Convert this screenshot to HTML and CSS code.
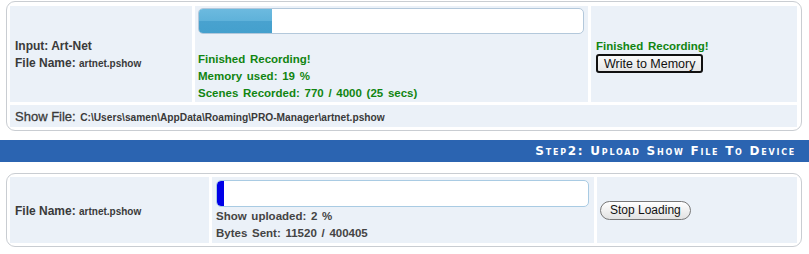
FILE: index.html
```html
<!DOCTYPE html>
<html>
<head>
<meta charset="utf-8">
<link rel="stylesheet" href="styles.css">
</head>
<body>
<div class="panel rec">
  <div class="cell info">
    <div class="lbl">Input: Art-Net</div>
    <div class="lbl">File Name: <b class="val">artnet.pshow</b></div>
  </div>
  <div class="cell mid">
    <div class="bar"><div class="fill" style="width:19%"></div></div>
    <div class="green lines">
      <div>Finished Recording!</div>
      <div>Memory used: 19 %</div>
      <div>Scenes Recorded: 770 / 4000 (25 secs)</div>
    </div>
  </div>
  <div class="cell act">
    <div class="green">Finished Recording!</div>
    <button class="btn-write">Write to Memory</button>
  </div>
  <div class="cell showfile"><span class="big">Show File:</span> <b class="val">C:\Users\samen\AppData\Roaming\PRO-Manager\artnet.pshow</b></div>
</div>

<div class="stepbar">Step2: Upload Show File To Device</div>

<div class="panel up">
  <div class="cell info">
    <div class="lbl">File Name: <b class="val">artnet.pshow</b></div>
  </div>
  <div class="cell mid2">
    <div class="bar bar2"><div class="fill2" style="width:2%"></div></div>
    <div class="lines dark">
      <div>Show uploaded: 2 %</div>
      <div>Bytes Sent: 11520 / 400405</div>
    </div>
  </div>
  <div class="cell act2">
    <button class="btn-stop">Stop Loading</button>
  </div>
</div>
</body>
</html>
```
FILE: styles.css
```css
body {
  margin: 0;
  padding: 1px 7px 0 6px;
  background: #fff;
  font-family: "Liberation Sans", Arial, sans-serif;
  color: #333;
}
.panel {
  border: 1px solid #c9cdd2;
  border-radius: 9px;
  display: grid;
  gap: 3px;
  background: #fff;
}
.rec {
  padding: 4px 4px 3px 3px;
  grid-template-columns: 182px 1fr 206px;
  grid-template-rows: 96px 22px;
}
.up {
  margin-top: 11px;
  padding: 3px 4px 3px 3px;
  grid-template-columns: 199px 1fr 200px;
  grid-template-rows: 66px;
}
.cell {
  background: #ebf1f8;
}
.info {
  display: flex;
  flex-direction: column;
  justify-content: center;
  padding-left: 5px;
  padding-top: 2px;
}
.lbl {
  font-size: 12px;
  line-height: 17px;
  font-weight: bold;
  color: #3a3a3a;
}
.lbl .val {
  font-size: 10px;
}
.mid {
  padding: 2px 4px 0 3px;
}
.bar {
  height: 24px;
  border: 1px solid #b3c8db;
  border-radius: 5px;
  background: #fff;
  overflow: hidden;
}
.fill {
  height: 100%;
  background: linear-gradient(#6cbadf 0%, #5fb2da 48%, #49a2cf 52%, #44a0cd 100%);
}
.green {
  color: #118511;
  font-weight: bold;
  font-size: 11.5px;
  word-spacing: 1.5px;
}
.lines {
  line-height: 17px;
}
.mid .lines {
  margin-top: 17px;
}
.act {
  padding: 34px 0 0 5px;
}
.btn-write {
  display: block;
  margin-top: 2px;
  font-family: "Liberation Sans", Arial, sans-serif;
  font-size: 12.5px;
  height: 19px;
  padding: 0 6px;
  border: 2px solid #111;
  border-radius: 3px;
  background: linear-gradient(#fafafa, #e6e6e6);
  color: #111;
  line-height: 14px;
}
.showfile {
  grid-column: 1 / 4;
  padding: 2px 0 0 5px;
  font-weight: bold;
  color: #3a3a3a;
}
.showfile .val {
  font-size: 10.2px;
}
.big {
  font-size: 13px;
  font-weight: normal;
  -webkit-text-stroke: 0.3px #3a3a3a;
}
.stepbar {
  margin: 9px -7px 0 -6px;
  height: 22px;
  background: #2b64b1;
  color: #fff;
  font-family: "DejaVu Sans", Verdana, sans-serif;
  font-weight: bold;
  font-size: 12px;
  font-variant: small-caps;
  letter-spacing: 1.75px;
  text-align: right;
  padding-right: 13px;
  line-height: 22px;
}
.mid2 {
  padding: 3px 5px 0 4px;
}
.bar2 {
  height: 25px;
  border-color: #a9cbe3;
}
.fill2 {
  height: 100%;
  min-width: 6px;
  background: #0000e8;
  border-radius: 4px 0 0 4px;
}
.dark {
  font-size: 11.5px;
  font-weight: bold;
  color: #444;
  margin-top: 1px;
  word-spacing: 1.5px;
}
.act2 {
  display: flex;
  align-items: center;
  padding-left: 3px;
}
.btn-stop {
  font-family: "Liberation Sans", Arial, sans-serif;
  font-size: 12px;
  height: 19px;
  padding: 0 9px;
  border: 1px solid #777;
  border-radius: 10px;
  background: linear-gradient(#fff, #e2e2e2);
  color: #111;
  line-height: 16px;
}
```
